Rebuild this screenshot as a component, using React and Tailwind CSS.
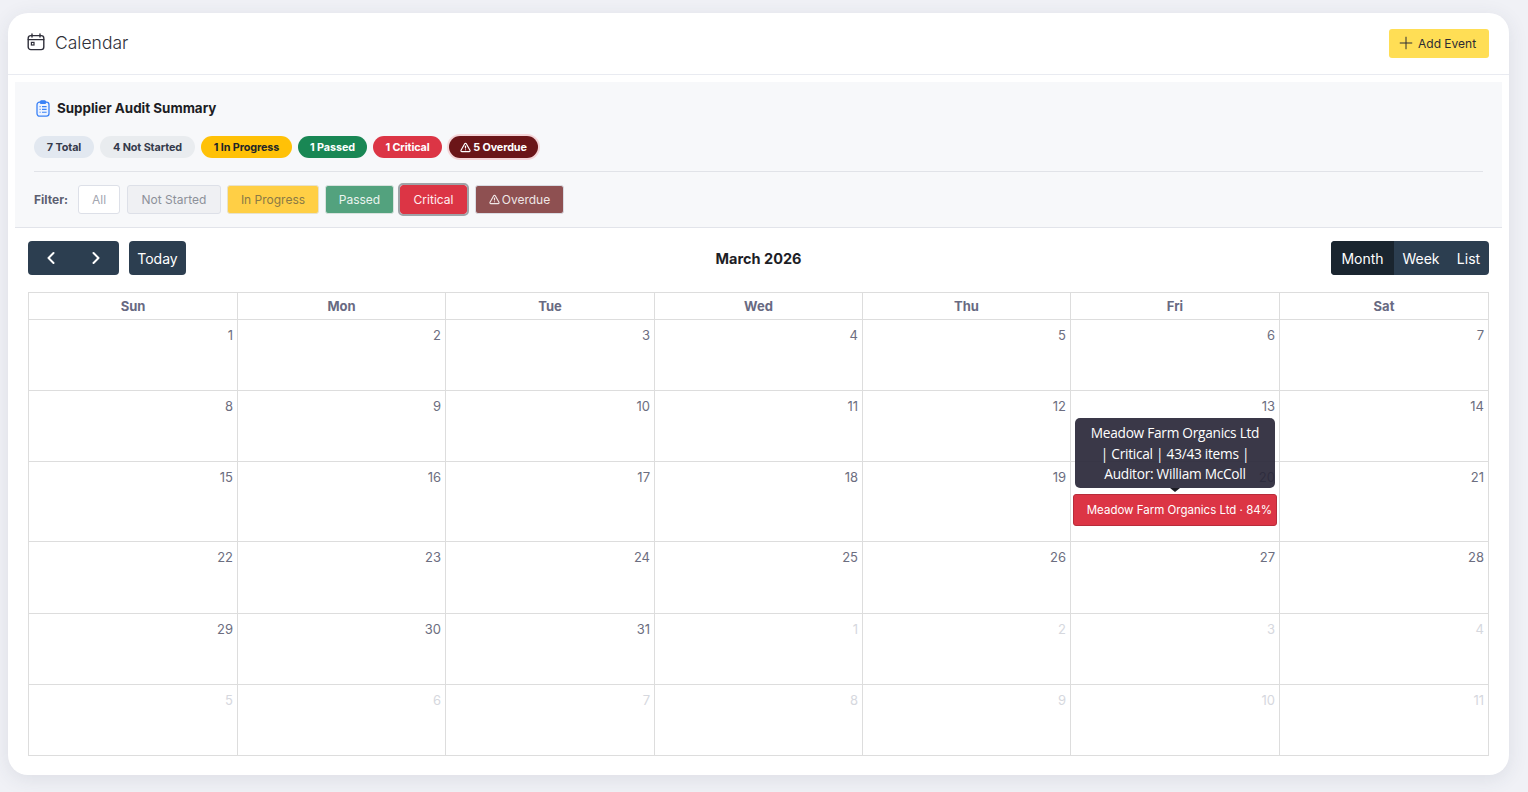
import { ChevronLeft, ChevronRight, Plus, TriangleAlert } from 'lucide-react'

const days = ['Sun', 'Mon', 'Tue', 'Wed', 'Thu', 'Fri', 'Sat']

const weeks = [
  { height: 'h-[71px]', cells: [1, 2, 3, 4, 5, 6, 7] },
  { height: 'h-[71px]', cells: [8, 9, 10, 11, 12, 13, 14] },
  { height: 'h-[80px]', cells: [15, 16, 17, 18, 19, 20, 21] },
  { height: 'h-[72px]', cells: [22, 23, 24, 25, 26, 27, 28] },
  { height: 'h-[71px]', cells: [29, 30, 31, 1, 2, 3, 4], muted: [3, 4, 5, 6] },
  { height: 'h-[70px]', cells: [5, 6, 7, 8, 9, 10, 11], muted: [0, 1, 2, 3, 4, 5, 6] },
]

function CalendarIcon() {
  return (
    <svg width="18" height="18" viewBox="0 0 18 18" fill="none" stroke="#2f2f3a" strokeWidth="1.4">
      <rect x="1.2" y="2.6" width="15.6" height="14" rx="2.6" />
      <path d="M1.2 6.6h15.6M5 1v3M13 1v3" strokeLinecap="round" />
      <rect x="4.4" y="9.4" width="2.6" height="2.6" strokeWidth="1.2" />
    </svg>
  )
}

function ClipboardIcon() {
  return (
    <svg width="14" height="17" viewBox="0 0 14 17" fill="#eef4ff" stroke="#3b82f6" strokeWidth="1.3">
      <rect x="1" y="2.2" width="12" height="14" rx="2.6" />
      <rect x="4.4" y="0.8" width="5.2" height="2.6" rx="1" fill="#3b82f6" />
      <path d="M3.6 6.6h1M3.6 9.4h1M3.6 12.2h1M6 6.6h4.6M6 9.4h4.6M6 12.2h4.6" strokeWidth="1.1" />
    </svg>
  )
}

function Pill({ width, className, children }) {
  return (
    <span className={`flex h-[22px] items-center justify-center gap-[2px] rounded-full text-[10.8px] leading-[21px] font-bold tracking-[-0.01em] ${width} ${className}`}>
      {children}
    </span>
  )
}

function FilterButton({ width, className, children }) {
  return (
    <button className={`flex h-[29px] items-center justify-center gap-[2px] rounded-[3px] border text-[12px] ${width} ${className}`}>
      {children}
    </button>
  )
}

export default function App() {
  return (
    <div className='h-[792px] overflow-hidden bg-[#f0f1f6] pb-[17px] pl-2 pr-[19px] pt-[13px] font-["Inter","Liberation_Sans",sans-serif]'>
      <div className="h-[762px] rounded-[20px] bg-white shadow-[0_4px_20px_rgba(50,55,80,0.1)]">
        <div className="flex h-[62px] items-center justify-between border-b border-[#e9ebf1] pl-[19px] pr-5">
          <div className="mb-1 flex items-center gap-[10px]">
            <CalendarIcon />
            <span className="pt-[3px] text-[17.5px] font-light text-[#2f3039]">Calendar</span>
          </div>
          <button className="flex h-[29px] w-[100px] items-center justify-start gap-[2px] rounded-[3px] bg-[#ffde55] pl-[7px] text-[12px] text-[#2c2c34]">
            <Plus size={20} strokeWidth={1.2} className="-mt-[2px]" />
            Add Event
          </button>
        </div>

        <div className="mx-[7px] mt-[7px] h-[146px] border-b border-[#e2e4ea] bg-[#f7f8fa] px-[19px] pt-[16px]">
          <div className="flex h-[20px] items-center gap-[7px] pl-[2px]">
            <ClipboardIcon />
            <h2 className="text-[13.4px] font-bold text-[#1c1d24]">Supplier Audit Summary</h2>
          </div>
          <div className="mt-[18px] flex items-center gap-[6px]">
            <Pill width="w-[60px]" className="bg-[#e2e8f0] text-[#343a4b]">7 Total</Pill>
            <Pill width="w-[95px]" className="bg-[#e9ecef] text-[#343a4b]">4 Not Started</Pill>
            <Pill width="w-[91px]" className="bg-[#ffc107] text-[#212529]">1 In Progress</Pill>
            <Pill width="w-[69px]" className="bg-[#198754] text-white">1 Passed</Pill>
            <Pill width="w-[69px]" className="bg-[#dc3545] text-white">1 Critical</Pill>
            <Pill width="w-[89px]" className="ml-[1px] bg-[#6b1518] text-white ring-2 ring-[#f5d5d8]">
              <TriangleAlert size={11} strokeWidth={2.5} />
              5 Overdue
            </Pill>
          </div>
          <div className="mt-[13px] h-px w-[1449px] bg-[#e1e3e8]" />
          <div className="mt-[13px] flex items-center">
            <span className="w-[44px] text-[12px] font-bold text-[#5c5f70]">Filter:</span>
            <FilterButton width="w-[42px] mr-[7px]" className="border-[#dde0e8] bg-white text-[#a3a6b0]">All</FilterButton>
            <FilterButton width="w-[94px] mr-[6px]" className="border-[#dde0e8] bg-[#eff0f3] text-[#8d909a]">Not Started</FilterButton>
            <FilterButton width="w-[92px] mr-[6px]" className="border-[#e8e2cc] bg-[#ffcf45] text-[#8a7a45]">In Progress</FilterButton>
            <FilterButton width="w-[69px] mr-[6px]" className="border-[#d8e2de] bg-[#53a27e] text-[#eaf4ef]">Passed</FilterButton>
            <FilterButton width="w-[67px] mr-[8px]" className="border-[#dc3545] bg-[#dc3545] text-[#ffeef0] outline-2 outline-[#a0a3a8]">Critical</FilterButton>
            <FilterButton width="w-[89px]" className="border-[#d9dbe2] bg-[#8e5051] text-[#efe6e6]">
              <TriangleAlert size={11} strokeWidth={2.5} />
              Overdue
            </FilterButton>
          </div>
        </div>

        <div className="px-5 pt-[13px]">
          <div className="flex h-[34px] items-center">
            <div className="flex h-full w-[91px] items-center justify-between rounded-[4px] bg-[#2c3e50] px-[13px] text-white">
              <ChevronLeft size={20} strokeWidth={2.4} />
              <ChevronRight size={20} strokeWidth={2.4} />
            </div>
            <button className="ml-[10px] h-full w-[57px] rounded-[4px] bg-[#2c3e50] text-[14px] text-white">Today</button>
            <h3 className="flex-1 pt-px text-center text-[14.5px] font-bold text-[#1d1e26]">March 2026</h3>
            <div className="flex h-full overflow-hidden rounded-[4px] bg-[#2c3e50] text-[14px] text-white">
              <button className="w-[63px] bg-[#1a252f]">Month</button>
              <button className="w-[54px]">Week</button>
              <button className="w-[41px]">List</button>
            </div>
          </div>

          <div className="mt-[17px] w-[1461px] border-b border-r border-[#dddddd]">
            <div className="grid h-[28px] grid-cols-[209px_208px_209px_208px_208px_209px_208px] border-l border-t border-[#dddddd]">
              {days.map((day) => (
                <div key={day} className="flex items-center justify-center border-b border-r border-[#dddddd] pt-px text-[13px] font-bold text-[#686a82] last:border-r-0">
                  {day}
                </div>
              ))}
            </div>
            {weeks.map((week, w) => (
              <div key={w} className={`grid grid-cols-[209px_208px_209px_208px_208px_209px_208px] border-l border-[#dddddd] ${week.height}`}>
                {week.cells.map((n, i) => {
                  const muted = week.muted && week.muted.includes(i)
                  return (
                    <div key={i} className="relative border-b border-r border-[#dddddd] pr-1 pt-[6px] text-right text-[13px] last:border-r-0 [.grid:last-child>&]:border-b-0">
                      <span className={muted ? 'text-[#d6d8de]' : 'text-[#6c6e80]'}>{n}</span>
                      {w === 2 && i === 5 && (
                        <>
                          <div className="absolute left-[4px] top-[-44px] z-10 w-[200px] rounded-[5px] bg-[#292738]/92 px-[14px] pb-[3px] pt-[5px] text-center font-['Open_Sans',sans-serif] text-[13.7px] leading-[20.6px] tracking-[-0.02em] text-white">
                            Meadow Farm Organics Ltd | Critical | 43/43 items | Auditor: William McColl
                            <div className="absolute bottom-[-4px] left-1/2 h-0 w-0 -translate-x-1/2 border-x-[5px] border-t-[4px] border-x-transparent border-t-[#1b1a22]" />
                          </div>
                          <div className="absolute left-[2px] top-[32px] z-10 flex h-[32px] w-[204px] items-center justify-end whitespace-nowrap rounded-[3px] border border-[#b82c3a] bg-[#dc3545] pr-1 pt-[2px] text-[11.5px] text-white">
                            Meadow Farm Organics Ltd · 84%
                          </div>
                        </>
                      )}
                    </div>
                  )
                })}
              </div>
            ))}
          </div>
        </div>
      </div>
    </div>
  )
}
